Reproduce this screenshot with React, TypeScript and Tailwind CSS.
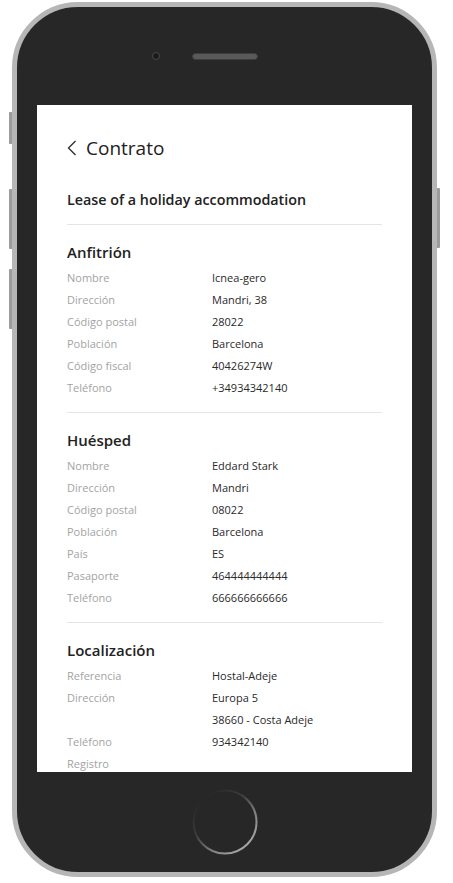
import React from "react";

type Row = [string, string];

const sections: { title: string; rows: Row[] }[] = [
  {
    title: "Anfitrión",
    rows: [
      ["Nombre", "Icnea-gero"],
      ["Dirección", "Mandri, 38"],
      ["Código postal", "28022"],
      ["Población", "Barcelona"],
      ["Código fiscal", "40426274W"],
      ["Teléfono", "+34934342140"],
    ],
  },
  {
    title: "Huésped",
    rows: [
      ["Nombre", "Eddard Stark"],
      ["Dirección", "Mandri"],
      ["Código postal", "08022"],
      ["Población", "Barcelona"],
      ["País", "ES"],
      ["Pasaporte", "464444444444"],
      ["Teléfono", "666666666666"],
    ],
  },
  {
    title: "Localización",
    rows: [
      ["Referencia", "Hostal-Adeje"],
      ["Dirección", "Europa 5"],
      ["", "38660 - Costa Adeje"],
      ["Teléfono", "934342140"],
      ["Registro", ""],
    ],
  },
];

function Section({ title, rows, last }: { title: string; rows: Row[]; last?: boolean }) {
  return (
    <div>
      <div className="pt-[16px] pb-[13px]">
        <div className="h-[22px] leading-[22px] text-[15px] font-[550] text-[#222]">{title}</div>
        <div className="mt-[4px]">
          {rows.map(([l, v], i) => (
            <div key={i} className="grid grid-cols-[145px_1fr] h-[22px] leading-[22px] text-[11px]">
              <span className="text-[#a3a3a3]">{l}</span>
              <span className="text-[#2a2a2a]">{v}</span>
            </div>
          ))}
        </div>
      </div>
      {!last && <div className="h-px bg-[#e5e5e5]" />}
    </div>
  );
}

export default function App() {
  return (
    <div
      className="w-[453px] h-[883px] bg-white pt-[2px] pl-[12px]"
      style={{ fontFamily: '"Open Sans", "Noto Sans", sans-serif' }}
    >
      <div className="relative w-[425px] h-[875px] rounded-[66px] border-[5px] border-[#b6b6b6] bg-[#272727] flex flex-col items-center">
        {/* side buttons */}
        <div className="absolute left-[-8px] top-[105px] w-[3px] h-[32px] bg-[#9c9c9c] rounded-l-[1px]" />
        <div className="absolute left-[-8px] top-[182px] w-[3px] h-[60px] bg-[#9c9c9c] rounded-l-[1px]" />
        <div className="absolute left-[-8px] top-[262px] w-[3px] h-[60px] bg-[#9c9c9c] rounded-l-[1px]" />
        <div className="absolute right-[-8px] top-[181px] w-[3px] h-[60px] bg-[#9c9c9c] rounded-r-[1px]" />

        {/* top bar */}
        <div className="h-[98px] w-full flex items-center pl-[135px]">
          <div className="w-[8px] h-[8px] rounded-full bg-[#1a1a1a] border-[1.5px] border-[#4a4a4a]" />
          <div className="ml-[32px] w-[66px] h-[7px] rounded-full bg-[#5a5a5a] border border-[#3e3e3e]" />
        </div>

        {/* screen */}
        <div className="w-[375px] h-[667px] bg-white overflow-hidden px-[30px] pt-[30px] text-[#222]">
          <div className="h-[26px] flex items-center">
            <svg width="10" height="16" viewBox="0 0 10 16">
              <polyline points="8.5,1 1.5,8 8.5,15" fill="none" stroke="#333" strokeWidth="1.4" />
            </svg>
            <span className="ml-[9px] text-[19px] leading-[26px] text-[#222]">Contrato</span>
          </div>
          <div className="mt-[28px] h-[22px] leading-[22px] text-[14.3px] font-[550] text-[#222]">
            Lease of a holiday accommodation
          </div>
          <div className="mt-[13px] h-px bg-[#e5e5e5]" />
          {sections.map((s, i) => (
            <Section key={s.title} title={s.title} rows={s.rows} last={i === sections.length - 1} />
          ))}
        </div>

        {/* bottom */}
        <div className="flex-1 w-full flex items-center justify-center">
          <svg width="68" height="68" viewBox="0 0 68 68">
            <defs>
              <linearGradient id="hb" x1="0.15" y1="0.1" x2="0.85" y2="0.9">
                <stop offset="0" stopColor="#262626" />
                <stop offset="0.35" stopColor="#3a3a3a" />
                <stop offset="0.7" stopColor="#808080" />
                <stop offset="1" stopColor="#a8a8a8" />
              </linearGradient>
            </defs>
            <circle cx="34" cy="34" r="31.5" fill="none" stroke="url(#hb)" strokeWidth="2" />
          </svg>
        </div>
      </div>
    </div>
  );
}
